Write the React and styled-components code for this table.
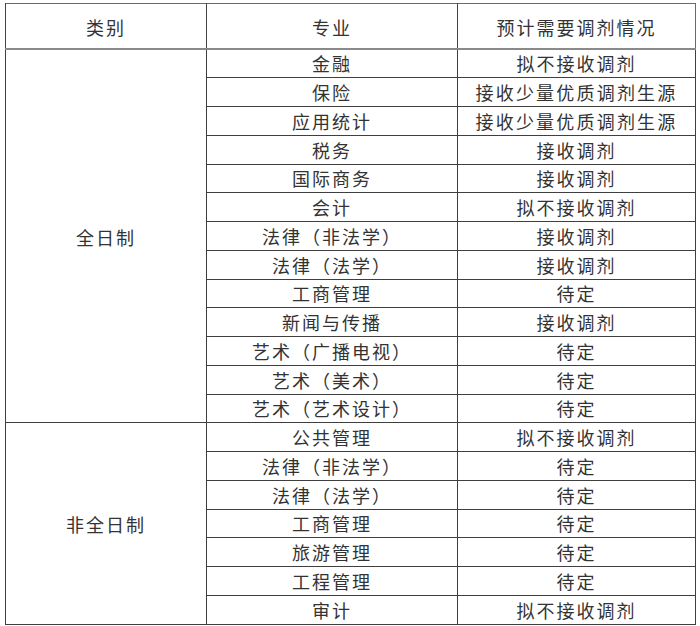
import React from "react";
import styled, { createGlobalStyle } from "styled-components";

const GlobalStyle = createGlobalStyle`
  html, body {
    margin: 0;
    padding: 0;
    background: #ffffff;
  }
  body {
    font-family: "Noto Sans CJK SC", "Noto Sans", sans-serif;
    color: #333333;
  }
`;

const Page = styled.div`
  padding: 3px 0 0 5px;
`;

const Table = styled.table`
  width: 690px;
  table-layout: fixed;
  border-collapse: collapse;
  border: 1.5px solid #6a6a6a;
  font-size: 18px;
  font-weight: 400;
  line-height: 1;
`;

const HeadCell = styled.th`
  height: 40.5px;
  padding: 3px 0 0;
  font-weight: 400;
  letter-spacing: 2px;
  text-align: center;
  vertical-align: middle;
  border-left: 1px solid #444;
  border-bottom: 2px solid #8a8a8a;
`;

const Cell = styled.td`
  height: 27.75px;
  padding: 0;
  text-align: center;
  vertical-align: middle;
  white-space: nowrap;
  letter-spacing: ${(p) => (p.$wide ? "2.2px" : "2px")};
  border: 1px solid #3f3f3f;
`;

const GroupCell = styled(Cell)`
  padding-top: 2px;
`;

const groups = [
  {
    name: "全日制",
    rows: [
      ["金融", "拟不接收调剂"],
      ["保险", "接收少量优质调剂生源"],
      ["应用统计", "接收少量优质调剂生源"],
      ["税务", "接收调剂"],
      ["国际商务", "接收调剂"],
      ["会计", "拟不接收调剂"],
      ["法律（非法学）", "接收调剂"],
      ["法律（法学）", "接收调剂"],
      ["工商管理", "待定"],
      ["新闻与传播", "接收调剂"],
      ["艺术（广播电视）", "待定"],
      ["艺术（美术）", "待定"],
      ["艺术（艺术设计）", "待定"],
    ],
  },
  {
    name: "非全日制",
    rows: [
      ["公共管理", "拟不接收调剂"],
      ["法律（非法学）", "待定"],
      ["法律（法学）", "待定"],
      ["工商管理", "待定"],
      ["旅游管理", "待定"],
      ["工程管理", "待定"],
      ["审计", "拟不接收调剂"],
    ],
  },
];

function App() {
  return (
    <>
      <GlobalStyle />
      <Page>
        <Table>
          <colgroup>
            <col style={{ width: 201 }} />
            <col style={{ width: 251 }} />
            <col style={{ width: 238 }} />
          </colgroup>
          <thead>
            <tr>
              <HeadCell>类别</HeadCell>
              <HeadCell>专业</HeadCell>
              <HeadCell>预计需要调剂情况</HeadCell>
            </tr>
          </thead>
          <tbody>
            {groups.map((g) =>
              g.rows.map(([major, status], i) => (
                <tr key={g.name + i}>
                  {i === 0 && (
                    <GroupCell rowSpan={g.rows.length}>{g.name}</GroupCell>
                  )}
                  <Cell>{major}</Cell>
                  <Cell $wide={status.length > 8}>{status}</Cell>
                </tr>
              ))
            )}
          </tbody>
        </Table>
      </Page>
    </>
  );
}

export default App;
